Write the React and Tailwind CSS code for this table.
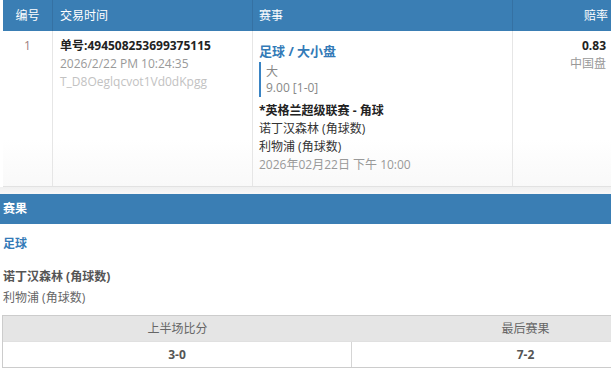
export default function App() {
  const font = { fontFamily: '"Open Sans", "Noto Sans CJK SC", sans-serif' };
  return (
    <div className="w-[611px] h-[368px] overflow-hidden bg-white text-[12px] text-[#333]" style={font}>
      {/* Main table */}
      <div className="ml-[3px] w-[608px]">
        <div className="flex h-[31px] bg-[#3a7eb4] text-white text-[12px] leading-[31px]">
          <div className="w-[50px] text-center border-r border-[#3571a3]">编号</div>
          <div className="w-[200px] pl-[7px] border-r border-[#3571a3]">交易时间</div>
          <div className="w-[260px] pl-[6px] border-r border-[#3571a3]">赛事</div>
          <div className="flex-1 text-right pr-[3px]">赔率</div>
        </div>
        <div className="flex h-[156px] border-b border-[#e2e2e2] bg-gradient-to-b from-white from-70% to-[#f9f9f9] leading-[18px]">
          <div className="w-[50px] text-center pt-[6px] text-[#a08080] border-r border-[#e6e6e6]">1</div>
          <div className="w-[200px] pl-[7px] pt-[6px] border-r border-[#e6e6e6]">
            <div className="font-bold text-[#222]">单号:494508253699375115</div>
            <div className="text-[#999]">2026/2/22 PM 10:24:35</div>
            <div className="text-[#c2c2c2]">T_D8Oeglqcvot1Vd0dKpgg</div>
          </div>
          <div className="w-[260px] pl-[6px] pt-[10px] border-r border-[#e6e6e6]">
            <div className="font-bold text-[13px] text-[#337ab7] leading-[20px]">足球 / 大小盘</div>
            <div className="mt-[1px] border-l-2 border-[#3a84c4] pl-[5px] h-[35px] text-[#888] leading-[16px] pt-[2px]">
              <div>大</div>
              <div>9.00 [1-0]</div>
            </div>
            <div className="mt-[5px] font-bold text-[#222]">*英格兰超级联赛 - 角球</div>
            <div className="text-[#333]">诺丁汉森林 (角球数)</div>
            <div className="text-[#333]">利物浦 (角球数)</div>
            <div className="text-[#999]">2026年02月22日 下午 10:00</div>
          </div>
          <div className="flex-1 text-right pr-[5px] pt-[6px]">
            <div className="font-bold text-[#222]">0.83</div>
            <div className="text-[#999]">中国盘</div>
          </div>
        </div>
      </div>
      <div className="h-[7px] bg-gradient-to-b from-[#f0f0f0] to-[#f8f8f8]"></div>

      {/* Result section */}
      <div className="h-[30px] bg-[#3a7eb4] text-white font-bold leading-[30px] pl-[3px]">赛果</div>
      <div className="pl-[3px] pt-[11px] font-bold text-[#337ab7] leading-[18px]">足球</div>
      <div className="pl-[3px] mt-[14px] font-bold text-[#555] leading-[20px]">诺丁汉森林 (角球数)</div>
      <div className="pl-[3px] text-[#666] leading-[22px]">利物浦 (角球数)</div>

      <div className="ml-[2px] mt-[6px] w-[698px] border border-[#cccccc]">
        <div className="flex h-[25px] bg-[#e5e5e5] text-[#666] leading-[25px] text-[12px]">
          <div className="w-[349px] text-center">上半场比分</div>
          <div className="flex-1 text-center">最后赛果</div>
        </div>
        <div className="flex h-[26px] leading-[25px] font-bold text-[#555] border-t border-[#e0e0e0]">
          <div className="w-[349px] text-center border-r border-[#d5d5d5]">3-0</div>
          <div className="flex-1 text-center">7-2</div>
        </div>
      </div>
    </div>
  );
}
